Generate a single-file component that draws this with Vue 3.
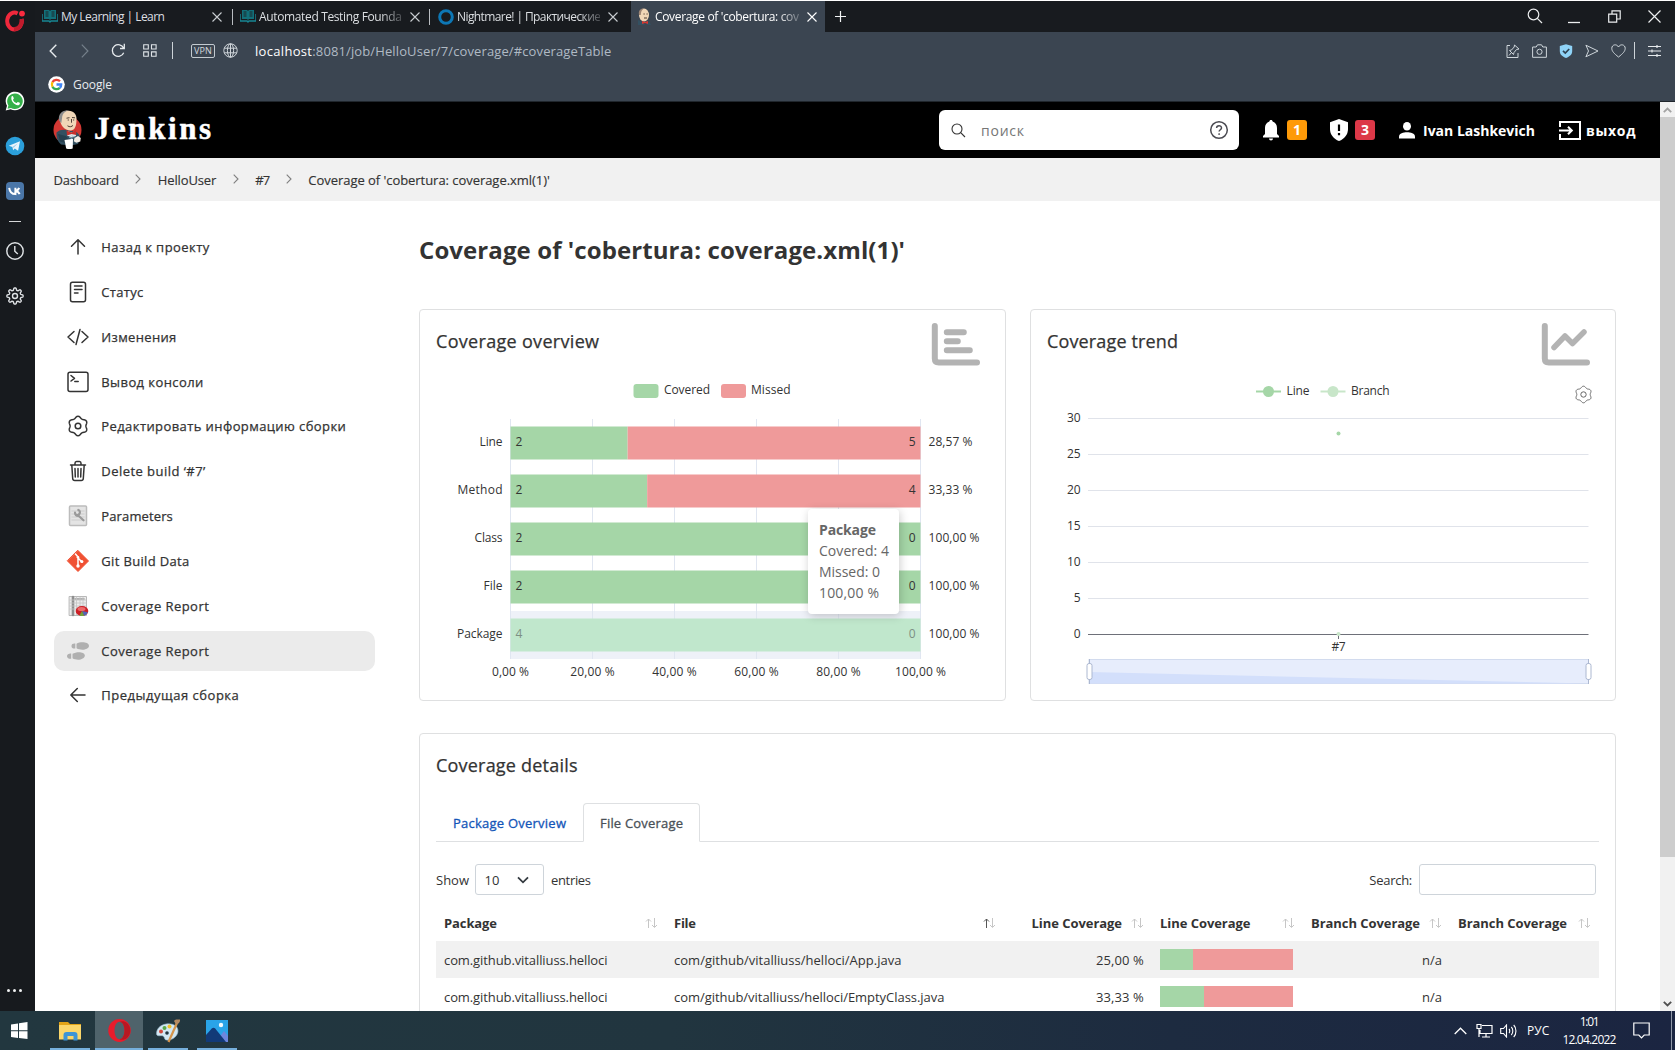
<script setup>
// Tightens or loosens tracking so that a label takes the given width in pixels.
const fitText = (el, { value }) => {
  if (!value) return
  el.style.letterSpacing = '0px'
  const natural = el.getBoundingClientRect().width
  const gaps = Math.max(1, el.textContent.trim().length - 1)
  el.style.letterSpacing = ((value - natural) / gaps).toFixed(3) + 'px'
}
const vFit = { mounted: fitText }

// Closed outline with rounded teeth, used by the gear icons.
const gear = (cx, cy, teeth, radius, depth, sharp = 1) => {
  const pts = []
  for (let i = 0; i < 120; i++) {
    const t = (i / 120) * Math.PI * 2
    const wave = Math.tanh(sharp * Math.cos(teeth * t)) / Math.tanh(sharp)
    const r = radius + depth * wave
    pts.push((cx + r * Math.sin(t)).toFixed(2) + ' ' + (cy - r * Math.cos(t)).toFixed(2))
  }
  return 'M' + pts.join('L') + 'Z'
}

const crumbs = [
  { text: 'Dashboard', w: 65.5 },
  { text: 'HelloUser', w: 58.5 },
  { text: '#7', w: 15 },
  { text: "Coverage of 'cobertura: coverage.xml(1)'", w: 241.5 }
]

const menu = [
  { icon: 'up', text: 'Назад к проекту', w: 108 },
  { icon: 'status', text: 'Статус', w: 42 },
  { icon: 'code', text: 'Изменения', w: 75 },
  { icon: 'console', text: 'Вывод консоли', w: 102 },
  { icon: 'gear', text: 'Редактировать информацию сборки', w: 244.5 },
  { icon: 'trash', text: 'Delete build ‘#7’', w: 104 },
  { icon: 'params', text: 'Parameters', w: 71.5 },
  { icon: 'git', text: 'Git Build Data', w: 88 },
  { icon: 'report', text: 'Coverage Report', w: 107.5 },
  { icon: 'steps', text: 'Coverage Report', w: 107.5, active: true },
  { icon: 'left', text: 'Предыдущая сборка', w: 137.5 }
]

const bars = [
  { name: 'Line', w: 23, covered: 2, missed: 5, pct: '28,57 %', pw: 44 },
  { name: 'Method', w: 45, covered: 2, missed: 4, pct: '33,33 %', pw: 44 },
  { name: 'Class', w: 28, covered: 2, missed: 0, pct: '100,00 %', pw: 51 },
  { name: 'File', w: 19, covered: 2, missed: 0, pct: '100,00 %', pw: 51 },
  { name: 'Package', w: 45.5, covered: 4, missed: 0, pct: '100,00 %', pw: 51, hover: true }
].map((b, i) => ({ ...b, y: 56.5 + i * 48, cw: (410 * b.covered) / (b.covered + b.missed) }))

const xTicks = [0, 20, 40, 60, 80, 100].map((v) => ({
  x: 90.5 + v * 4.1,
  label: v + ',00 %',
  w: v === 0 ? 37 : v === 100 ? 51 : 44.5
}))

const yTicks = [30, 25, 20, 15, 10, 5, 0].map((v, i) => ({ v, y: Math.round(48.4 + i * 35.85) + 0.5 }))

const heads = [
  { text: 'Package', w: 53 },
  { text: 'File', w: 22, sorted: true },
  { text: 'Line Coverage', w: 90.5, right: true },
  { text: 'Line Coverage', w: 90.5 },
  { text: 'Branch Coverage', w: 109, right: true },
  { text: 'Branch Coverage', w: 109 }
]
const rows = [
  { pkg: 'com.github.vitalliuss.helloci', file: 'com/github/vitalliuss/helloci/App.java', fw: 227.5, pct: '25,00 %', v: 25 },
  { pkg: 'com.github.vitalliuss.helloci', file: 'com/github/vitalliuss/helloci/EmptyClass.java', fw: 270.5, pct: '33,33 %', v: 33.33 }
]
</script>

<template>
  <div class="screen">
    <div class="browser">
      <aside class="rail">
        <svg class="rail-logo" width="20" height="22" viewBox="0 0 20 22">
          <path d="M12.6 3.4A7.3 8.4 0 1 0 16.6 9" fill="none" stroke="#f0283c" stroke-width="4" />
          <path d="M9 19a7.3 8.4 0 0 0 7.6-10" fill="none" stroke="#c11b2c" stroke-width="4" />
          <circle cx="17" cy="3.6" r="2.9" fill="#fb2b40" />
        </svg>
        <svg class="rail-item" width="20" height="20" viewBox="0 0 20 20">
          <path d="M.7 19.4 2 14.8A9.3 9.3 0 1 1 5.6 18.2z" fill="#fff" />
          <path d="M2.5 17.7l.9-3.2A7.8 7.8 0 1 1 6 17z" fill="#35b04a" />
          <path d="M6.6 5.6c.6-.7 1.2-.6 1.5 0l.7 1.7c.1.5-.7 1.2-.8 1.6.8 1.5 1.900 2.500 3.400 3.100.5-.1 1-1.200 1.500-1.100l1.800.9c.4.300.1 1.400-.4 1.900-3 2.300-9.500-3.400-7.700-8.100z" fill="#fff" />
        </svg>
        <svg class="rail-item" width="20" height="20" viewBox="0 0 20 20">
          <circle cx="10" cy="10" r="9.300" fill="#2b9fda" />
          <path d="M3.800 9.800 15 5.200l-1.900 9.600-3.300-2.300-1.700 1.700-.7-3.300z" fill="#e9f5fc" />
          <path d="M7.400 10.900 13 7.200 8.600 11.800z" fill="#9dc9e4" />
        </svg>
        <svg class="rail-item" width="20" height="20" viewBox="0 0 20 20">
          <rect x="1" y="1" width="18" height="18" rx="4" fill="#4a76a8" />
          <path d="M4.200 6.800c.5 4 2.200 6.200 6.200 6.300V6.800M10.400 10c2-.2 3-1.400 3.700-3.200M10.400 10c2.300.1 3.400 1.400 4.200 3.200" fill="none" stroke="#fff" stroke-width="2" />
        </svg>
        <span class="rail-dash"></span>
        <svg class="rail-clock" width="20" height="20" viewBox="0 0 20 20" fill="none" stroke="#dfe2e5" stroke-width="1.400">
          <circle cx="10" cy="10" r="8.200" /><path d="M9.800 5v5.200l3 2.800" />
        </svg>
        <svg class="rail-item" width="20" height="20" viewBox="0 0 20 20" fill="none" stroke="#dfe2e5" stroke-width="1.400">
          <path :d="gear(10, 10, 8, 7, 1.1, 2)" /><circle cx="10" cy="10" r="2.500" />
        </svg>
        <span class="rail-dots"><i></i><i></i><i></i></span>
      </aside>

      <div class="window">
        <div class="tabs">
          <div class="tab t1">
            <svg width="16" height="15" viewBox="0 0 16 15"><path d="M2 1h5l1 1 1-1h5v9H9L8 11 7 10H2z" fill="#12707a" /><path d="M3.500 3h3M3.500 5h3M3.500 7h3M9.500 3h3M9.500 5h3M9.500 7h3" stroke="#1c2429" /><path d="M0 5v7h7l1 1 1-1h7V5" fill="none" stroke="#178794" stroke-width="1.400" /></svg>
            <span class="tab-text whole"><span v-fit="104">My Learning | Learn</span></span>
            <svg class="x" width="10" height="10" viewBox="0 0 10 10"><path d="M.5.500l9 9M9.500.500l-9 9" /></svg>
          </div>
          <div class="tab t2">
            <svg width="16" height="15" viewBox="0 0 16 15"><path d="M2 1h5l1 1 1-1h5v9H9L8 11 7 10H2z" fill="#12707a" /><path d="M3.500 3h3M3.500 5h3M3.500 7h3M9.500 3h3M9.500 5h3M9.500 7h3" stroke="#1c2429" /><path d="M0 5v7h7l1 1 1-1h7V5" fill="none" stroke="#178794" stroke-width="1.400" /></svg>
            <span class="tab-text"><span v-fit="143">Automated Testing Founda</span></span>
            <svg class="x" width="10" height="10" viewBox="0 0 10 10"><path d="M.5.500l9 9M9.500.500l-9 9" /></svg>
          </div>
          <div class="tab t3">
            <svg width="16" height="16" viewBox="0 0 16 16"><circle cx="8" cy="8" r="6.300" fill="none" stroke="#0d77b5" stroke-width="3" /></svg>
            <span class="tab-text"><span v-fit="144">Nightmare! | Практические</span></span>
            <svg class="x" width="10" height="10" viewBox="0 0 10 10"><path d="M.5.500l9 9M9.500.500l-9 9" /></svg>
          </div>
          <div class="tab t4">
            <svg width="15" height="17" viewBox="0 0 15 17"><ellipse cx="7" cy="7" rx="5" ry="6.500" fill="#f0d6b7" /><path d="M2 7C1 2 4 .4 7 .5 4.500 2 4 3.500 3.800 7z" fill="#9d8574" /><path d="M6.500 6h1.200M9.500 6h1.200M7 10h3" stroke="#4c3a30" /><path d="M1 12l5 2 2 3H1zM12 13l2 4h-4z" fill="#335061" /><path d="M5 13l3 1 3-1v3l-3-1-3 1z" fill="#d33833" /></svg>
            <span class="tab-text"><span v-fit="144">Coverage of 'cobertura: cov</span></span>
            <svg class="x" width="10" height="10" viewBox="0 0 10 10"><path d="M.5.500l9 9M9.500.500l-9 9" /></svg>
          </div>
          <svg class="plus" width="11" height="11" viewBox="0 0 11 11"><path d="M5.500 0v11M0 5.500h11" stroke="#f2f4f5" stroke-width="1.200" /></svg>
          <div class="win-ctl">
            <svg width="16" height="16" viewBox="0 0 16 16"><circle cx="6.500" cy="6.500" r="5.300" /><path d="M10.300 10.300 15 15" /></svg>
            <svg width="12" height="14" viewBox="0 0 12 14"><path d="M0 12.500h12" stroke-width="1.300" /></svg>
            <svg width="13" height="13" viewBox="0 0 13 13"><path d="M.7 4.200h8v8h-8zM4 4V.8h8.200V9H9" /></svg>
            <svg width="13" height="13" viewBox="0 0 13 13"><path d="M.5.500l12 12M12.500.500l-12 12" /></svg>
          </div>
        </div>

        <div class="toolbar">
          <svg class="tb-back" width="8" height="14" viewBox="0 0 8 14"><path d="M7.300.700 1.200 7l6.100 6.300" stroke="#e6eaed" stroke-width="1.400" /></svg>
          <svg class="tb-fwd" width="8" height="14" viewBox="0 0 8 14"><path d="M.8.700 6.900 7 .8 13.300" stroke="#75808b" stroke-width="1.200" /></svg>
          <svg class="tb-reload" width="15" height="15" viewBox="0 0 15 15"><path d="M12.700 9.800A5.900 5.900 0 1 1 12.600 5M13.300.800v4.700H9" stroke="#e6eaed" stroke-width="1.300" /></svg>
          <svg class="tb-grid" width="14" height="13" viewBox="0 0 14 13"><path d="M.7.700h4.600v4.300H.7zM8.500.700h4.600v4.300H8.500zM.7 7.900h4.600v4.300H.7zM8.500 7.900h4.600v4.300H8.500z" stroke="#dfe4e8" stroke-width="1.100" /></svg>
          <span class="bar"></span>
          <span class="vpn"><span v-fit="18">VPN</span></span>
          <svg class="tb-globe" width="15" height="15" viewBox="0 0 15 15"><g stroke="#cfd5da" stroke-width="1"><circle cx="7.500" cy="7.500" r="6.700" /><ellipse cx="7.500" cy="7.500" rx="3.100" ry="6.700" /><path d="M1.300 5.200h12.400M1.300 9.800h12.400M7.500.800v13.400" /></g></svg>
          <span class="url"><b v-fit="57">localhost</b><span v-fit="299">:8081/job/HelloUser/7/coverage/#coverageTable</span></span>
          <div class="tb-right">
            <svg width="14" height="14" viewBox="0 0 14 14"><path d="M4 1.500H1v12h11V9M8.500 1l4.500 4-2.500.500L8 8.500l-.5 2-4-4 2-.500L8.200 3zM5.500 8.500 3 11.500" stroke="#cfd6db" /></svg>
            <svg width="15" height="14" viewBox="0 0 15 14"><path d="M.6 3h3.600L5.500.800h4L10.800 3h3.600v10.300H.6z" stroke="#cfd6db" /><circle cx="7.500" cy="7.800" r="2.600" stroke="#cfd6db" /></svg>
            <svg width="14" height="14" viewBox="0 0 14 14"><path d="M7 .300 13.200 2v5c0 3.500-2.500 5.700-6.200 6.900C3.300 12.700.8 10.500.8 7V2z" fill="#8fd3f7" /><path d="M4 6.800l2.300 2.300L10.200 5" stroke="#2f4252" stroke-width="1.700" /></svg>
            <svg width="14" height="14" viewBox="0 0 14 14"><path d="M.9 1.200 13 7 .9 12.800 3.500 7z" stroke="#cfd6db" /></svg>
            <svg width="15" height="14" viewBox="0 0 15 14"><path d="M7.500 13C3 9.500.8 7.200.8 4.300.8.500 5.700-.5 7.500 3 9.300-.5 14.200.500 14.200 4.300c0 2.900-2.200 5.200-6.700 8.700z" stroke="#cfd6db" /></svg>
            <span class="bar"></span>
            <svg width="13" height="12" viewBox="0 0 13 12"><path d="M0 1.500h13M0 6h13M0 10.500h13M9 0v3M4 4.500v3M9 9v3" stroke="#e6eaed" stroke-width="1.200" /></svg>
          </div>
        </div>

        <div class="bookmarks">
          <svg width="17" height="17" viewBox="0 0 17 17"><circle cx="8.500" cy="8.500" r="8.300" fill="#fff" /><g fill="none" stroke-width="2.300"><path d="M12 5.300A4.700 4.700 0 0 0 4.500 6.100" stroke="#ea4335" /><path d="M4.500 6.100a4.700 4.700 0 0 0 0 4.800" stroke="#fbbc05" /><path d="M4.500 10.900a4.700 4.700 0 0 0 7.300 1" stroke="#34a853" /><path d="M8.500 8.500h4.700a4.700 4.700 0 0 1-1.400 3.400" stroke="#4285f4" /></g></svg>
          <span v-fit="39">Google</span>
        </div>

        <div class="viewport">
          <div class="page">
            <header class="jk-header">
              <svg class="butler" width="30" height="42" viewBox="0 0 30 42">
                <ellipse cx="14.500" cy="21" rx="14" ry="14" fill="#d33833" />
                <path d="M3.500 23.500c3-2.500 6-3 9-2.500l9 1.500c4 1 5.500 4 5.500 7.500l-2 5-7 1.500-10-1c-3.500-3-5-7-4.500-12z" fill="#335061" />
                <path d="M7 10C7 4 11 1.500 15.500 1.800c5.500.4 8 3.700 8 8 0 7-1.500 11.200-5.500 11.700C11.500 21.700 7 16 7 10z" fill="#f0d6b7" />
                <path d="M6 11.500C5 5 9 1 16 1.300c-4 1.200-6.500 2.700-7 8.200L8.300 14z" fill="#8d8d8d" />
                <path d="M13.500 9.200l3-.5M19 8.500l3 .3M18.500 10v3.700M14.500 16.800c2 1.500 4.500 1 5.500-.5M14.700 11h1.200M20 11h1.200" stroke="#3c2f28" stroke-width=".9" fill="none" />
                <path d="M14.500 22l4 1.500 4-1.500.5 5-4 1.500-5-2z" fill="#dfe6ea" />
                <path d="M13.500 21.500l5 2 4.500-2.500.3 5-4.800-1-4.500 1.500z" fill="#c92f2b" />
                <path d="M5 25l8 2 3.500 5-2 2.500-7.500-2z" fill="#263f4e" />
                <path d="M11.500 31l8.500-1.200L19.700 39.500q-3.500 1-6.500 0z" fill="#fff" />
                <path d="M21.500 29l3.500-2 2.800 2-.5 3.500-4 1.200-2.500-1.500z" fill="#f3ece4" />
                <path d="M16 28l3 1.500M19 26.500l2 2" stroke="#8fb0c4" />
              </svg>
              <span class="brand"><span v-fit="117">Jenkins</span></span>
              <div class="search">
                <svg width="15" height="15" viewBox="0 0 15 15" fill="none" stroke="#333" stroke-width="1.100"><circle cx="6" cy="6" r="5" /><path d="M9.700 9.700 14 14" /></svg>
                <span class="ph" v-fit="43">поиск</span>
                <svg class="help" width="20" height="20" viewBox="0 0 20 20" fill="none" stroke="#4b4b52" stroke-width="1.500"><circle cx="10" cy="10" r="8.300" /><path d="M7.600 8.100c0-3.200 4.900-3.200 4.900-.2 0 1.800-2.400 1.900-2.400 3.700" /><circle cx="10.100" cy="14.100" r=".5" fill="#4b4b52" stroke-width=".9" /></svg>
              </div>
              <svg class="bell" width="18" height="21" viewBox="0 0 18 21"><path d="M9 0c1 0 1.600.600 1.600 1.600C13.500 2.400 15 5 15 8v6l2 2v1.500H1V16l2-2V8c0-3 1.500-5.600 4.400-6.400C7.400.600 8 0 9 0zM7 18.600h4a2 2 0 0 1-4 0z" fill="#fff" /></svg>
              <span class="badge orange">1</span>
              <svg class="shield" width="18" height="22" viewBox="0 0 18 22"><path d="M9 0l9 3.300V10c0 5.500-3.600 10-9 12-5.400-2-9-6.500-9-12V3.300z" fill="#fff" /><path d="M9 5.500v6.500M9 14v2.300" stroke="#000" stroke-width="2.200" /></svg>
              <span class="badge red">3</span>
              <svg class="user" width="16" height="17" viewBox="0 0 16 17"><ellipse cx="8" cy="4.300" rx="4" ry="4.300" fill="#fff" /><path d="M0 16.500v-2C0 11.500 4.500 10.300 8 10.300s8 1.200 8 4.200v2z" fill="#fff" /></svg>
              <b class="who" v-fit="115">Ivan Lashkevich</b>
              <svg class="exit" width="22" height="19" viewBox="0 0 22 19" fill="none" stroke="#fff" stroke-width="2"><path d="M1 6V1h20v17H1v-5M0 9.500h12M9 5.800l3.800 3.700L9 13.200" /></svg>
              <b class="out" v-fit="49.5">выход</b>
            </header>

            <nav class="crumbs">
              <template v-for="(c, i) in crumbs" :key="i">
                <svg v-if="i" width="6" height="10" viewBox="0 0 6 10"><path d="M.7.700 5 5 .7 9.300" fill="none" stroke="#808080" stroke-width="1.100" /></svg>
                <span v-fit="c.w">{{ c.text }}</span>
              </template>
            </nav>

            <div class="body">
              <ul class="menu">
                <li v-for="m in menu" :key="m.icon" :class="{ active: m.active }">
                  <svg width="24" height="24" viewBox="0 0 24 24" fill="none" stroke="#333" stroke-width="1.500" stroke-linecap="round" stroke-linejoin="round">
                    <path v-if="m.icon === 'up'" d="M12 19V5M5.500 11.300 12 4.800l6.500 6.500" />
                    <path v-if="m.icon === 'left'" d="M19 12H5M11.300 5.500 4.800 12l6.500 6.500" />
                    <template v-if="m.icon === 'status'"><rect x="4.500" y="2.200" width="15" height="19.500" rx="2" /><path d="M8.500 6h7.500M8.500 9.500h7.500M8.500 13h3.500" /></template>
                    <path v-if="m.icon === 'code'" d="M8 6.500 2 12l6 5.500M16 6.500l6 5.500-6 5.500M14 4.500 10 19.500" />
                    <template v-if="m.icon === 'console'"><rect x="2" y="2.300" width="20" height="19.300" rx="2" /><path d="M5 5.500 8.500 8.300 5 11M8.800 11.500h3.400" /></template>
                    <template v-if="m.icon === 'gear'"><path :d="gear(12, 12, 6, 8.8, 0.9, 0.5)" /><circle cx="12" cy="12" r="2.800" /></template>
                    <path v-if="m.icon === 'trash'" d="M4.500 6h15M9 6V4.300C9 3 9.500 2.500 10.500 2.500h3C14.500 2.500 15 3 15 4.300V6M5.800 6l.9 13.500c.1 1.400.7 2 2 2h6.600c1.300 0 1.900-.6 2-2L18.200 6M12 9.500v8.500M9 9.500l.3 8.500M15 9.500l-.3 8.500" />
                    <g v-if="m.icon === 'params'" stroke="none"><rect x="3.500" y="2" width="17" height="19.500" rx="1" fill="#e4e4e4" stroke="#bcbcbc" /><path d="M6 7h12M6 10h12M6 13h12M6 16h12" stroke="#d3d3d3" /><path d="M9 8.500c0 2 1 3.500 3.500 3.300l5 4.500M9.500 10.500c4 2.500 6-3.500 2.800-4.500" fill="none" stroke="#9a9a9a" stroke-width="2.200" /></g>
                    <g v-if="m.icon === 'git'"><path d="M12 1.500 22.500 12 12 22.500 1.500 12z" fill="#f05133" stroke="#f05133" stroke-width="1" /><path d="M9.500 5 12 8v9M12 9l4 4" stroke="#fff" /><circle cx="12" cy="8.300" r="1.300" fill="#fff" stroke="none" /><circle cx="12" cy="17" r="1.700" fill="#fff" stroke="none" /><circle cx="15.800" cy="12.500" r="1.600" fill="#fff" stroke="none" /></g>
                    <g v-if="m.icon === 'report'" stroke="none"><rect x="3.500" y="2.500" width="17" height="19" fill="#ececec" stroke="#b8b8b8" stroke-width="1" /><path d="M7 3v18" stroke="#8f8f8f" stroke-width="2.600" /><path d="M9 5h9" stroke="#9c9c9c" stroke-width="1.600" /><path d="M4 6h16M4 9h16M4 12h16M4 15h16M10.500 3v18M14 3v18M17 3v18" stroke="#c4c4c4" stroke-width=".8" /><ellipse cx="16" cy="17" rx="6.300" ry="5" fill="#cc1f26" /><ellipse cx="15.500" cy="15" rx="4" ry="2" fill="#ee6a6a" /><path d="M16 17l5.800 1.200c-.7 2-2 3-3.800 3.600z" fill="#5264b8" /><path d="M16 17l2 4.800c-2 .6-3.500.2-4.500-.3z" fill="#6fa53b" /></g>
                    <g v-if="m.icon === 'steps'" fill="#b0b0b0" stroke="none"><path d="M10.500 4.800c4-2.300 12-2 12.500 2 0 4-8 5.200-12.500 2.500z" /><path d="M9.300 4.500v5C7 9.800 5.500 9 5.500 7S7 4.300 9.300 4.500z" /><path d="M6.500 14.800c4-2.300 12-2.300 12.300 1.700 0 4.200-8 5.500-12.300 2.800z" /><path d="M5.200 14.500v5.200C2.800 20 1 19 1 17.200s1.800-2.900 4.200-2.700z" /></g>
                  </svg>
                  <span v-fit="m.w">{{ m.text }}</span>
                </li>
              </ul>

              <main>
                <h1><span v-fit="486">Coverage of 'cobertura: coverage.xml(1)'</span></h1>
                <div class="cards">
                  <section class="card overview">
                    <div class="card-head">
                      <h2 v-fit="163">Coverage overview</h2>
                      <svg width="49" height="43" viewBox="0 0 49 43" fill="none" stroke="#b3b3b3" stroke-width="6" stroke-linecap="round"><path d="M3.800 3v32.500q0 4 4 4H46M15.800 9.200h17M15.800 18.300h11M15.800 27.200h23" /></svg>
                    </div>
                    <svg class="plot" width="585" height="330" viewBox="0 0 585 330">
                      <rect x="213.500" y="14" width="25" height="14" rx="3" fill="#a5d6a7" />
                      <text x="244" y="24" textLength="46">Covered</text>
                      <rect x="301" y="14" width="25" height="14" rx="3" fill="#ef9a9a" />
                      <text x="331" y="24" textLength="39.500">Missed</text>
                      <rect x="90.500" y="241" width="410" height="48" fill="#eef1f8" />
                      <path v-for="t in xTicks" :key="t.x" :d="'M' + t.x + ' 49V289'" stroke="#e0e6f1" />
                      <g v-for="b in bars" :key="b.name">
                        <rect x="90.500" :y="b.y" :width="b.cw" height="33" :fill="b.hover ? '#c0e7cc' : '#a5d6a7'" />
                        <rect v-if="b.missed" :x="90.5 + b.cw" :y="b.y" :width="410 - b.cw" height="33" fill="#ef9a9a" />
                        <text x="82.500" :y="b.y + 19.500" text-anchor="end" :textLength="b.w">{{ b.name }}</text>
                        <text x="95.500" :y="b.y + 19.500" :class="{ dim: b.hover }">{{ b.covered }}</text>
                        <text x="495.500" :y="b.y + 19.500" text-anchor="end" :class="{ dim: b.hover }">{{ b.missed }}</text>
                        <text x="508.500" :y="b.y + 19.500" :textLength="b.pw">{{ b.pct }}</text>
                      </g>
                      <text v-for="t in xTicks" :key="t.label" :x="t.x" y="306" text-anchor="middle" :textLength="t.w">{{ t.label }}</text>
                    </svg>
                    <div class="tip">
                      <b v-fit="57">Package</b><br />
                      <span v-fit="70">Covered: 4</span><br />
                      <span v-fit="61">Missed: 0</span><br />
                      <span v-fit="60">100,00 %</span>
                    </div>
                  </section>

                  <section class="card trend">
                    <div class="card-head">
                      <h2 v-fit="131">Coverage trend</h2>
                      <svg width="49" height="43" viewBox="0 0 49 43" fill="none" stroke="#b3b3b3" stroke-width="6" stroke-linecap="round" stroke-linejoin="round"><path d="M3.800 3v32.500q0 4 4 4H46" /><path d="M13 24.500 24 13l7.500 7.500L43 9" stroke-width="5.500" /></svg>
                    </div>
                    <svg class="plot" width="584" height="330" viewBox="0 0 584 330">
                      <path d="M225 21.500h25" stroke="#a5d6a7" stroke-width="2" /><circle cx="237.500" cy="21.500" r="5.500" fill="#a5d6a7" />
                      <text x="255.500" y="25" textLength="23">Line</text>
                      <path d="M289.500 21.500h25" stroke="#c8e6c9" stroke-width="2" /><circle cx="302" cy="21.500" r="5.500" fill="#c8e6c9" />
                      <text x="320" y="25" textLength="38.500">Branch</text>
                      <g fill="none" stroke="#666"><path :d="gear(552.5, 24.5, 6, 7.5, 0.8, 0.5)" /><circle cx="552.500" cy="24.500" r="2.700" /></g>
                      <g v-for="t in yTicks" :key="t.v">
                        <path :d="'M57 ' + t.y + 'H557.500'" :stroke="t.v ? '#e0e3ea' : '#6e7079'" />
                        <text x="49.500" :y="t.y + 3" text-anchor="end" :textLength="t.v > 9 ? 13.5 : 7">{{ t.v }}</text>
                      </g>
                      <circle cx="307.500" cy="63.500" r="2" fill="#a5d6a7" />
                      <path d="M307.500 264v5" stroke="#6e7079" /><circle cx="307.500" cy="264" r="2" fill="#c8e6c9" />
                      <text x="307.500" y="281" text-anchor="middle" textLength="14">#7</text>
                      <rect x="58" y="289.500" width="499.500" height="24" fill="#e7edfc" stroke="#d2dbee" />
                      <path d="M58 302 557 313.500H58z" fill="#d3dffb" />
                      <g fill="#fff" stroke="#acb8d1"><path d="M58.500 289v25M557.500 289v25" /><rect x="56" y="293.500" width="5" height="16" rx="2" /><rect x="555" y="293.500" width="5" height="16" rx="2" /></g>
                    </svg>
                  </section>
                </div>

                <section class="card details">
                  <h2><span v-fit="141.5">Coverage details</span></h2>
                  <div class="dtabs">
                    <span class="dtab link"><span v-fit="113">Package Overview</span></span>
                    <span class="dtab on"><span v-fit="83">File Coverage</span></span>
                  </div>
                  <div class="controls">
                    <span class="lbl-show" v-fit="33">Show</span>
                    <span class="select"><span v-fit="15">10</span><svg width="12" height="8" viewBox="0 0 12 8"><path d="M1 1.300l5 5 5-5" fill="none" stroke="#343a40" stroke-width="1.800" /></svg></span>
                    <span v-fit="40">entries</span>
                    <span class="lbl-search" v-fit="43">Search:</span>
                    <span class="input"></span>
                  </div>
                  <div class="trow thead">
                    <div v-for="(h, i) in heads" :key="i" class="cell" :class="{ right: h.right }">
                      <b v-fit="h.w">{{ h.text }}</b>
                      <svg width="13" height="10" viewBox="0 0 13 10" fill="none"><path d="M3.500 10V1M1 3.500 3.500 1 6 3.500" :stroke="h.sorted ? '#555' : '#c6c6c6'" /><path d="M9.500 0v9M7 7l2.500 2.500L12 7" stroke="#c6c6c6" /></svg>
                    </div>
                  </div>
                  <div v-for="r in rows" :key="r.file" class="trow">
                    <div class="cell"><span v-fit="163.5">{{ r.pkg }}</span></div>
                    <div class="cell"><span v-fit="r.fw">{{ r.file }}</span></div>
                    <div class="cell right"><span v-fit="48">{{ r.pct }}</span></div>
                    <div class="cell"><span class="meter"><i :style="{ width: r.v + '%' }"></i></span></div>
                    <div class="cell right"><span v-fit="20">n/a</span></div>
                    <div class="cell"></div>
                  </div>
                </section>
              </main>
            </div>
          </div>
          <div class="scroll">
            <span class="arrow"><svg width="9" height="6" viewBox="0 0 9 6"><path d="M.8 5.200 4.500 1.500l3.700 3.700" fill="none" stroke="#a3a3a3" stroke-width="1.800" /></svg></span>
            <span class="thumb"></span>
            <span class="arrow down"><svg width="9" height="6" viewBox="0 0 9 6"><path d="M.8.800l3.700 3.700L8.200.800" fill="none" stroke="#505050" stroke-width="1.800" /></svg></span>
          </div>
        </div>
      </div>
    </div>

    <footer class="taskbar">
      <span class="task start"><svg width="17" height="17" viewBox="0 0 17 17"><path d="M0 2.400 7 1.400v6.800H0zM8 1.300 16.500 0v8.200H8zM0 9.200h7V16l-7-1zM8 9.200h8.500V17L8 16z" fill="#fff" /></svg></span>
      <span class="task open"><svg width="22" height="20" viewBox="0 0 22 20"><path d="M0 1h9l2 2h11v15H0z" fill="#e2a316" /><path d="M0 4h22v14.500H0z" fill="#fbd66a" /><path d="M4.500 19.500V14q0-3 3-3h8q3 0 3 3v5.500h-4V15h-6v4.500z" fill="#3d94d6" /></svg></span>
      <span class="task open opera"><svg width="23" height="23" viewBox="0 0 23 23"><path fill-rule="evenodd" d="M11.500 0a11.200 11.400 0 1 1 0 22.900 11.200 11.400 0 1 1 0-22.900zM11.500 2.800c-3 0-5 4-5 8.700s2 8.700 5 8.700 5-4 5-8.700-2-8.700-5-8.700z" fill="#e81c2c" /><path d="M11.500 2.800c3 0 5 4 5 8.700s-2 8.700-5 8.700c2 1 5 .8 7.500-1.200 4.500-4 4.500-11 0-15-2.500-2-5.500-2.200-7.500-1.200z" fill="#b81822" /></svg></span>
      <span class="task open"><svg width="25" height="24" viewBox="0 0 25 24"><path d="M10 5c7-1 12 2 12 7s-6 10-12 9c-2-.5-1-3-3-4s-6 1-6.500-2C.3 10 4 6 10 5z" fill="#d3e8f3" stroke="#93b5c7" stroke-width=".6" /><circle cx="5" cy="12.500" r="2" fill="#d34a3c" /><circle cx="8.500" cy="9" r="2" fill="#5aa84a" /><circle cx="13.500" cy="7.500" r="2" fill="#f2c02e" /><circle cx="11" cy="14" r="1.800" fill="#22353e" /><path d="M21 4 12.500 23" stroke="#d6954c" stroke-width="2.200" /><path d="M18 2c2-2.500 4-1 6-1.500.5 3-2 4.500-4 5z" fill="#b58a62" /></svg></span>
      <span class="task open"><svg width="22" height="22" viewBox="0 0 22 22"><rect width="22" height="22" fill="#2aa4e8" /><path d="M10 22 18 11l4 5v6z" fill="#6d86dd" /><path d="M0 15 6 8.300q1.500-1 3 0L20 22H0z" fill="#123a78" /><circle cx="15" cy="5" r="2.200" fill="#f2fbff" /></svg></span>
      <div class="tray">
        <svg class="caret" width="13" height="8" viewBox="0 0 13 8"><path d="M.7 7 6.500 1.200 12.300 7" stroke="#fff" stroke-width="1.300" /></svg>
        <svg width="17" height="15" viewBox="0 0 17 15"><path d="M6 2.500h10v8H4V7M10 10.500V14M6 14h8M1 1.500h4v4H1zM3 5.500V14" stroke="#fff" stroke-width="1.200" /></svg>
        <svg width="17" height="14" viewBox="0 0 17 14"><path d="M.7 4.500h2.800L6.500 1v12l-3-3.500H.7zM9 5c1 1 1 3 0 4M11.300 3c2 2 2 6 0 8M13.700 1c3 3 3 9 0 12" stroke="#fff" stroke-width="1.100" /></svg>
        <span class="lang" v-fit="22">РУС</span>
        <span class="clock"><span v-fit="20">1:01</span><span v-fit="54">12.04.2022</span></span>
        <svg class="note" width="17" height="17" viewBox="0 0 17 17"><path d="M.8 1h15.400v12h-5L8.500 15.800 5.800 13h-5z" stroke="#fff" stroke-width="1.200" /></svg>
        <span class="edge"></span>
      </div>
    </footer>
  </div>
</template>

<style>
body { margin: 0; background: #fff; }
</style>

<style scoped>
.screen {
  width: 1675px; height: 1050px; padding-top: 1px; box-sizing: border-box; overflow: hidden;
  display: flex; flex-direction: column; background: #fff;
  font-family: "Open Sans", "Noto Sans", sans-serif; font-size: 13px; color: #333; white-space: nowrap;
}
svg { display: block; flex: none; }
h1, h2, ul { margin: 0; padding: 0; font-weight: inherit; }
.browser { display: flex; height: 1010px; flex: none; }
.rail { width: 35px; background: #171a1e; display: flex; flex-direction: column; flex: none; }
.rail-logo { margin: 9px 0 59px 5px; }
.rail-item { margin: 0 0 25px 5px; }
.rail-dash { width: 12px; height: 1px; margin: -5px 0 20px 9px; background: #d5d7d9; }
.rail-clock { margin: -1px 0 25px 4.5px; }
.rail-clock + .rail-item { margin-left: 4.5px; }
.rail-dots { display: flex; gap: 3px; margin: auto 0 19px 7px; }
.rail-dots i { width: 3px; height: 3px; border-radius: 50%; background: #f0f1f2; }
.window { flex: 1; min-width: 0; display: flex; flex-direction: column; }

.tabs { height: 31px; flex: none; background: #181b1f; display: flex; align-items: center; color: #dcdfe2; font-size: 12px; }
.tab { height: 31px; display: flex; align-items: center; justify-content: space-between; box-sizing: border-box; }
.tab-text { margin: 0 auto 0 3px; mask-image: linear-gradient(to right, #000 85%, rgba(0, 0, 0, .25)); }
.tab-text.whole { mask-image: none; }
.x { fill: none; stroke: #c9cdd1; stroke-width: 1.1; margin-right: 11px; }
.t1 { width: 198px; padding-left: 7px; }
.t2 { width: 197px; padding-left: 7px; }
.t3 { width: 201px; padding-left: 8px; }
.t1, .t2 { background: linear-gradient(#b9bdc1, #b9bdc1) right center / 1px 16px no-repeat; }
.t2 .x { margin-right: 10px; }
.t3 .x { margin-right: 13px; }
.t4 { width: 194px; padding-left: 6px; background: #3b4551; color: #fff; }
.t4 .x { margin-right: 8px; stroke: #fff; }
.plus { margin: 0 0 0 10px; }
.win-ctl { margin-left: auto; margin-right: 14px; display: flex; align-items: center; fill: none; stroke: #eceeef; stroke-width: 1.2; }
.win-ctl svg:nth-child(1) { margin-right: 25px; margin-bottom: 2px; }
.win-ctl svg:nth-child(2) { margin-right: 28px; }
.win-ctl svg:nth-child(3) { margin-right: 27px; }

.toolbar { height: 37px; flex: none; background: #3b4551; display: flex; align-items: center; fill: none; }
.tb-back { margin-left: 14px; }
.tb-fwd { margin-left: 24px; }
.tb-reload { margin-left: 22px; }
.tb-grid { margin-left: 17px; }
.bar { width: 1px; height: 17px; background: #cdd3d8; flex: none; margin-left: 15px; }
.vpn { margin-left: 18px; width: 22px; height: 12px; border: 1px solid #c3cad0; border-radius: 2px; font-size: 9px; line-height: 12px; text-align: center; color: #d5dadf; }
.tb-globe { margin-left: 8px; }
.url { margin-left: 17px; color: #b0bac4; font-size: 13px; display: flex; }
.url b { font-weight: 400; color: #fff; }
.tb-right { margin-left: auto; margin-right: 14px; display: flex; align-items: center; gap: 12px; }
.tb-right .bar { margin: 0 1px 0 -4px; }
.bookmarks { height: 33px; padding-bottom: 2px; flex: none; background: #3b4551; border-bottom: 1px solid #20262c; box-sizing: border-box; display: flex; align-items: center; padding-left: 13px; gap: 8px; color: #e8ebee; font-size: 12px; }

.viewport { flex: 1; min-height: 0; display: flex; }
.page { width: 1625px; overflow: hidden; }
.jk-header { height: 56px; background: #000; display: flex; align-items: center; color: #fff; box-sizing: border-box; padding-left: 18px; }
.butler { margin-bottom: 0; }
.brand { margin-left: 11px; width: 117px; font: bold 31px "Liberation Serif", "DejaVu Serif", serif; -webkit-text-stroke: .5px #fff; padding-bottom: 3px; }
.search { margin-left: 728px; width: 300px; height: 40px; flex: none; border-radius: 6px; background: #fff; display: flex; align-items: center; box-sizing: border-box; padding: 0 10px 0 12px; }
.ph { margin-left: 15px; color: #767676; font-size: 14px; padding-top: 1px; }
.help { margin-left: auto; }
.bell { margin-left: 23px; }
.badge { width: 20px; height: 20px; border-radius: 3px; font-weight: 700; font-size: 14px; line-height: 20px; text-align: center; margin-left: 7px; }
.orange { background: #fe9a08; }
.red { background: #dc3848; }
.shield { margin-left: 23px; }
.user { margin-left: 24px; }
.who { margin-left: 8px; width: 115px; font-size: 14px; padding-top: 1px; }
.exit { margin-left: 21px; }
.out { margin-left: 5px; font-size: 14px; padding-top: 1px; }
.crumbs { height: 43px; background: #f1f1f1; display: flex; align-items: center; padding-left: 18.5px; gap: 16.5px; font-size: 13px; -webkit-text-stroke: .15px #333; }
.crumbs svg { margin-bottom: 2px; }

.body { display: flex; }
.menu { list-style: none; padding: 26px 0 0 19px; width: 321px; flex: none; -webkit-text-stroke: .25px #333; }
.menu li { height: 40px; margin-bottom: 4.85px; display: flex; align-items: center; border-radius: 10px; padding-left: 12px; gap: 11.3px; }
.menu li.active { background: #ebebeb; }
main { margin-left: 44px; width: 1197px; flex: none; }
h1 { height: 108px; padding-top: 31px; box-sizing: border-box; font-size: 24px; line-height: 36px; font-weight: 700; }
.cards { display: flex; justify-content: space-between; margin-bottom: 32px; }
.card { border: 1px solid #dfe0e1; border-radius: 4px; box-sizing: border-box; }
.overview { width: 587px; height: 392px; position: relative; }
.trend { width: 586px; height: 392px; }
.card-head { height: 60px; box-sizing: border-box; padding: 13px 25px 0 16px; display: flex; justify-content: space-between; }
h2 { font-size: 18px; line-height: 36px; -webkit-text-stroke: .25px #333; }
.plot { font-size: 12px; }
.plot text { fill: #333; }
.plot .dim { fill: #7d8f84; }
.tip { position: absolute; left: 388px; top: 199px; width: 91px; height: 105px; box-sizing: border-box; padding: 10px 0 0 11px; background: #fff; border-radius: 4px; box-shadow: 1px 2px 10px rgba(0, 0, 0, .2); font-size: 14px; line-height: 21px; color: #666; }
.tip span, .tip b { display: inline-block; }

.details { height: 400px; padding: 0 16px; }
.details h2 { padding-top: 13px; height: 69px; box-sizing: border-box; }
.dtabs { height: 38px; border-bottom: 1px solid #dee0e2; display: flex; }
.dtab { height: 37px; line-height: 38px; padding: 0 16px; border: 1px solid transparent; border-radius: 4px 4px 0 0; font-size: 13px; }
.link { color: #1355b8; width: 113px; -webkit-text-stroke: .3px #1355b8; }
.on { width: 83px; border-color: #dee0e2; border-bottom-color: #fff; background: #fff; color: #495057; -webkit-text-stroke: .3px #495057; }
.controls { height: 31px; margin-top: 22px; display: flex; align-items: center; }
.lbl-show { width: 33px; margin-right: 6px; }
.select { width: 69px; height: 31px; box-sizing: border-box; border: 1px solid #ced4da; border-radius: 3px; margin-right: 7px; display: flex; align-items: center; justify-content: space-between; padding: 0 14px 0 8.5px; }
.lbl-search { margin-left: auto; margin-right: 7px; }
.input { width: 177px; height: 31px; box-sizing: border-box; border: 1px solid #ced4da; border-radius: 3px; margin-right: 3px; }
.trow { display: grid; grid-template-columns: 230px 338px 148px 151px 147px 149px; height: 37px; }
.thead { margin-top: 9px; }
.trow:nth-child(5) { background: #f1f1f1; }
.cell { display: flex; align-items: center; padding: 0 8px; }
.thead .cell { justify-content: space-between; }
.thead .cell.right { justify-content: flex-end; gap: 9px; }
.cell.right { justify-content: flex-end; }
.meter { width: 133px; height: 21px; background: #ef9a9a; }
.meter i { display: block; height: 21px; background: #a5d6a7; }

.scroll { width: 15px; background: #f1f1f1; display: flex; flex-direction: column; }
.arrow { height: 15px; display: flex; align-items: center; justify-content: center; }
.thumb { height: 740px; background: #cdcdcd; }
.down { margin-top: auto; }

.taskbar { height: 39px; flex: none; background: linear-gradient(90deg, #22373f 0%, #21353f 40%, #1d2b40 70%, #1b2541 100%); display: flex; color: #fff; }
.task { width: 40px; height: 39px; margin-right: 9px; display: flex; align-items: center; justify-content: center; box-sizing: border-box; flex: none; }
.start { width: 38px; margin-right: 12px; }
.open { box-shadow: inset 0 -2px #76b0dd; }
.opera { width: 48px; margin: 0 5px 0 -4px; background: #4f636b; }
.tray { margin-left: auto; display: flex; align-items: center; fill: none; font-size: 12px; }
.caret { margin-right: 9px; }
.tray svg:nth-child(2) { margin-right: 7px; }
.lang { margin-left: 10px; width: 22px; }
.clock { margin-left: 13px; width: 54px; display: flex; flex-direction: column; align-items: center; line-height: 18px; }
.note { margin-left: 17px; }
.edge { width: 1px; height: 39px; margin: 0 3px 0 21px; background: #8f97a6; }
</style>
